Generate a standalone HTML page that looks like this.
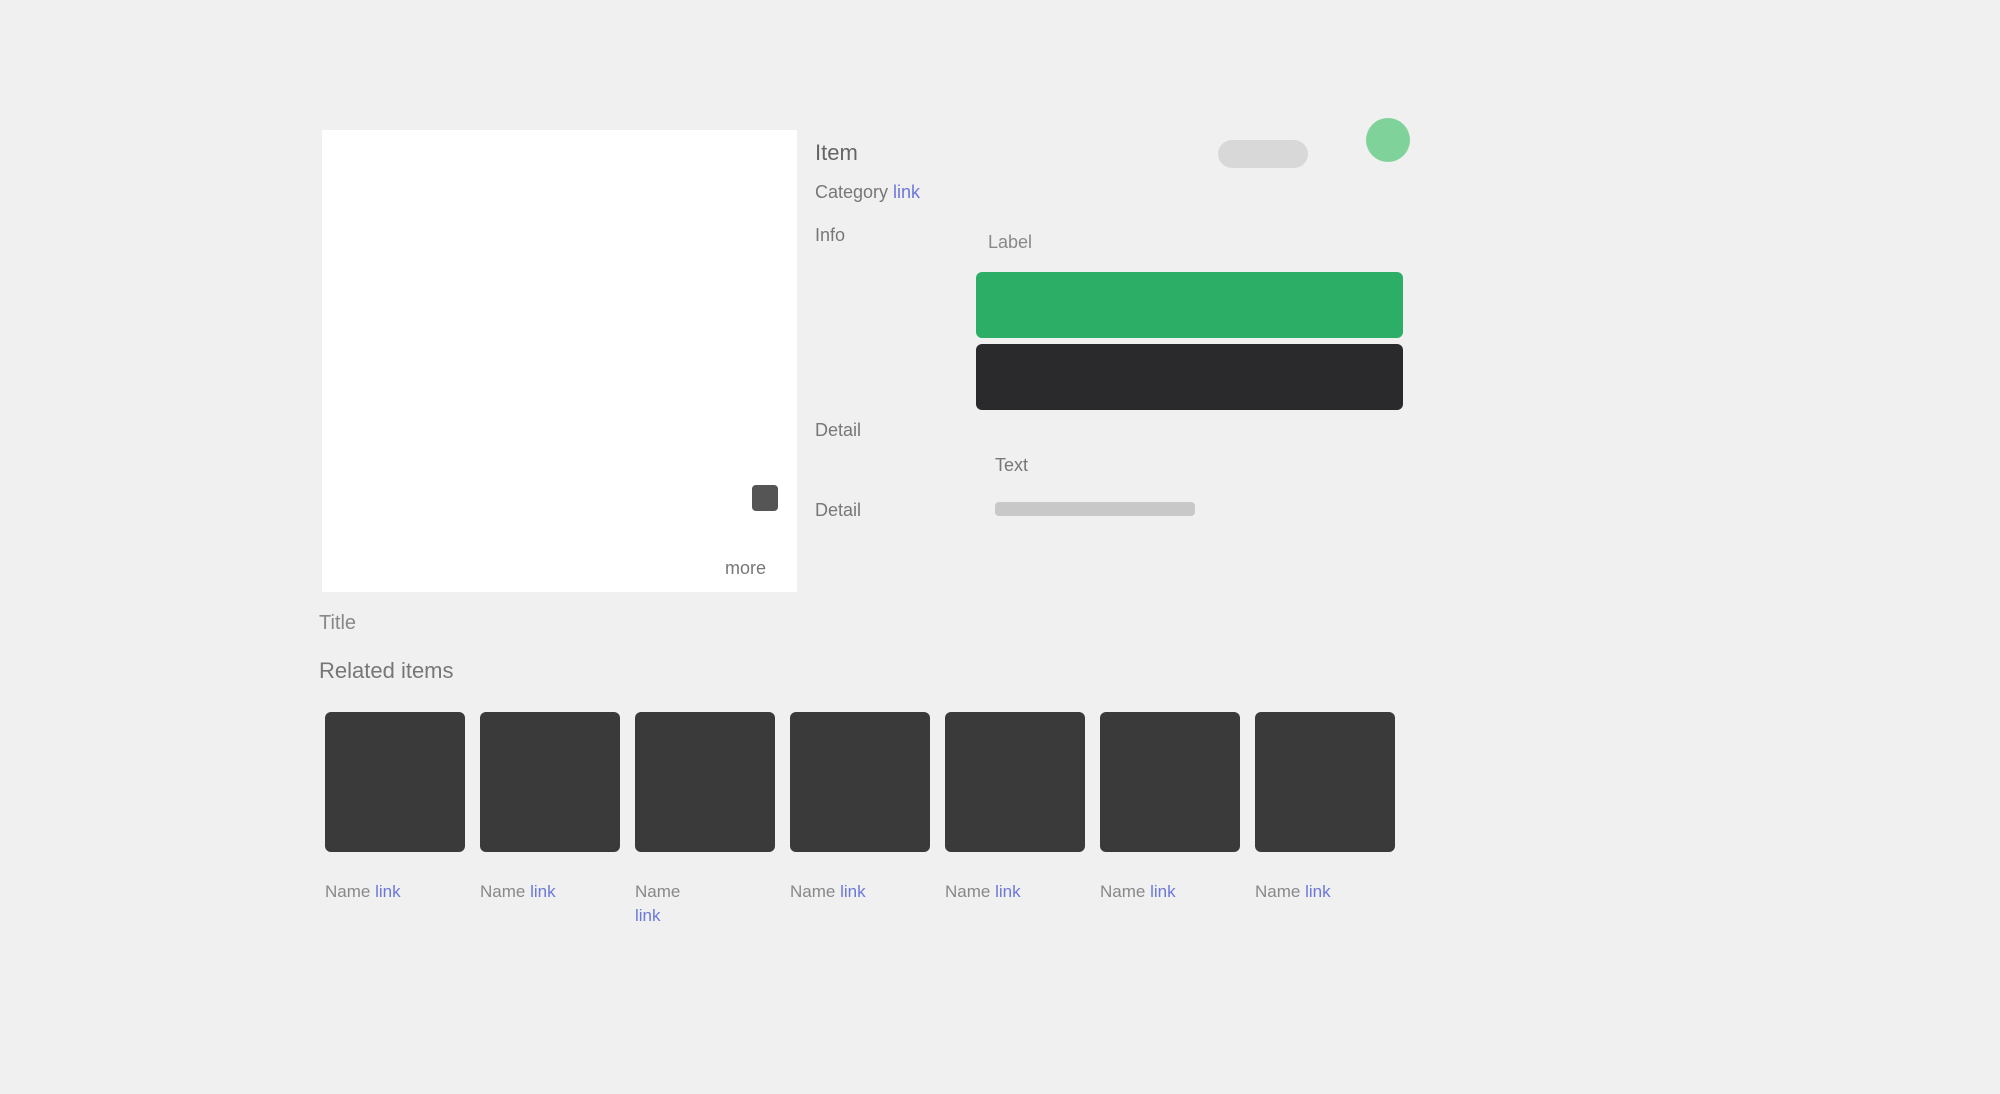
<!DOCTYPE html>
<html><head><meta charset="utf-8"><style>
html,body{margin:0;padding:0;width:2000px;height:1094px;background:#f0f0f1;font-family:"Liberation Sans",sans-serif;overflow:hidden;position:relative}
.a{position:absolute}
.t{color:#777;font-size:18px}
.card{position:absolute;top:712px;width:140px;height:140px;background:#3a3a3a;border-radius:6px}
.cap{position:absolute;top:880px;font-size:17px;color:#888;width:140px;line-height:24px}
.cap b{color:#6c78d8;font-weight:normal}
</style></head><body>
<div class="a" style="left:322px;top:130px;width:475px;height:462px;background:#fff"></div>
<div class="a t" style="left:815px;top:140px;font-size:22px;color:#666">Item</div>
<div class="a t" style="left:815px;top:182px">Category <span style="color:#6c78d8">link</span></div>
<div class="a t" style="left:815px;top:225px">Info</div>
<div class="a" style="left:1218px;top:140px;width:90px;height:28px;border-radius:14px;background:#d8d8d8"></div>
<div class="a" style="left:1366px;top:118px;width:44px;height:44px;border-radius:50%;background:#7fd39a"></div>
<div class="a t" style="left:988px;top:232px;color:#888">Label</div>
<div class="a" style="left:976px;top:272px;width:427px;height:66px;border-radius:6px;background:#2cae66"></div>
<div class="a" style="left:976px;top:344px;width:427px;height:66px;border-radius:6px;background:#2a2a2c"></div>
<div class="a t" style="left:815px;top:420px">Detail</div>
<div class="a t" style="left:995px;top:455px">Text</div>
<div class="a t" style="left:815px;top:500px">Detail</div>
<div class="a" style="left:995px;top:502px;width:200px;height:14px;background:#c8c8c8;border-radius:4px"></div>
<div class="a" style="left:752px;top:485px;width:26px;height:26px;background:#555;border-radius:4px"></div>
<div class="a t" style="left:725px;top:558px">more</div>
<div class="a t" style="left:319px;top:612px;font-size:20px;color:#888">Title</div>
<div class="a t" style="left:319px;top:658px;font-size:22px;color:#777">Related items</div>
<div class="card" style="left:325px"></div>
<div class="card" style="left:480px"></div>
<div class="card" style="left:635px"></div>
<div class="card" style="left:790px"></div>
<div class="card" style="left:945px"></div>
<div class="card" style="left:1100px"></div>
<div class="card" style="left:1255px"></div>
<div class="cap" style="left:325px">Name <b>link</b></div>
<div class="cap" style="left:480px">Name <b>link</b></div>
<div class="cap" style="left:635px">Name<br><b>link</b></div>
<div class="cap" style="left:790px">Name <b>link</b></div>
<div class="cap" style="left:945px">Name <b>link</b></div>
<div class="cap" style="left:1100px">Name <b>link</b></div>
<div class="cap" style="left:1255px">Name <b>link</b></div>
</body></html>
